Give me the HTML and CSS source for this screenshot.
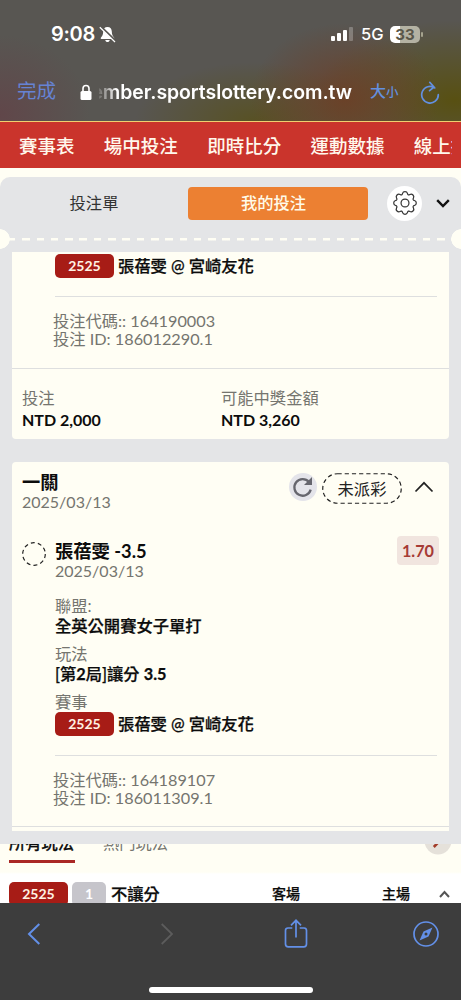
FILE: index.html
```html
<!DOCTYPE html>
<html lang="zh-Hant">
<head>
<meta charset="utf-8">
<title>我的投注</title>
<link rel="stylesheet" href="styles.css">
</head>
<body>
<div class="phone">
  <header class="browser-top">
    <div class="status">
      <span class="time">9:08</span>
      <svg class="bell" width="17" height="17" viewBox="0 0 17 17"><path d="M8.5 1C5.600 1 4.300 3 4.200 5.500C4.100 9 3.300 10 1.800 11.700Q1.300 13 2.500 13H14.500Q15.700 13 15.200 11.700C13.700 10 12.900 9 12.800 5.500C12.700 3 11.400 1 8.500 1ZM6.300 14H10.700C10.300 16.700 6.700 16.700 6.300 14Z" fill="#fff"/><path d="M1.500 .5L16.500 15" stroke="#585652" stroke-width="2.400"/><path d="M.8 1.200L16 16" stroke="#fff" stroke-width="1.200"/></svg>
      <svg class="signal" width="24" height="15" viewBox="0 0 24 15"><g fill="#fff"><rect x="1" y="9" width="4" height="5" rx="1"/><rect x="7" y="6" width="4" height="8" rx="1"/><rect x="13" y="3" width="4" height="11" rx="1"/><rect x="19" y="0" width="4" height="14" rx="1" opacity=".25"/></g></svg>
      <span class="net">5G</span>
      <span class="battery">33</span><i class="battery-tip"></i>
    </div>
    <div class="address">
      <span class="done">完成</span>
      <svg class="lock" width="12" height="17" viewBox="0 0 12 17"><path d="M3 8V4.500a3 3 0 0 1 6 0V8" fill="none" stroke="#fff" stroke-width="1.600"/><rect x=".5" y="7" width="11" height="9" rx="1.500" fill="#fff"/></svg>
      <span class="url"><span>ember.sportslottery.com.tw</span></span>
      <span class="size">大<small>小</small></span>
      <svg class="reload" width="20" height="24" viewBox="0 0 20 24"><path d="M14.700 6.900A8.300 8.300 0 1 0 18.300 13.700M9.800 1.400L14 6L9.600 9.700" fill="none" stroke="#6390df" stroke-width="1.700" stroke-linecap="round" stroke-linejoin="round"/></svg>
    </div>
  </header>

  <nav class="nav"><span>賽事表</span><span>場中投注</span><span>即時比分</span><span>運動數據</span><span class="last">線上投注</span></nav>

  <main class="slip">
    <div class="tabs">
      <span class="tab">投注單</span>
      <span class="tab active">我的投注</span>
      <span class="gear"><svg width="24" height="24" viewBox="-.5 -.5 17 17" fill="none" stroke="#333" stroke-width=".85"><circle cx="8" cy="8" r="2.800"/><path d="M9.796 1.343c-.527-1.790-3.065-1.790-3.592 0l-.094.319a.873.873 0 0 1-1.255.520l-.292-.160c-1.640-.892-3.433.902-2.540 2.541l.159.292a.873.873 0 0 1-.520 1.255l-.319.094c-1.790.527-1.790 3.065 0 3.592l.319.094a.873.873 0 0 1 .520 1.255l-.160.292c-.892 1.640.901 3.434 2.541 2.540l.292-.159a.873.873 0 0 1 1.255.520l.094.319c.527 1.790 3.065 1.790 3.592 0l.094-.319a.873.873 0 0 1 1.255-.520l.292.160c1.640.893 3.434-.902 2.540-2.541l-.159-.292a.873.873 0 0 1 .520-1.255l.319-.094c1.790-.527 1.790-3.065 0-3.592l-.319-.094a.873.873 0 0 1-.520-1.255l.160-.292c.893-1.640-.902-3.433-2.541-2.540l-.292.159a.873.873 0 0 1-1.255-.520z"/></svg></span>
      <svg class="fold" width="14" height="9" viewBox="0 0 14 9"><path d="M1.200 1.200L7 7L12.800 1.200" fill="none" stroke="#111" stroke-width="2.400"/></svg>
    </div>
    <div class="perforation"></div>

    <section class="card first">
      <div class="match"><b class="code">2525</b><span class="teams">張蓓雯 @ 宮崎友花</span></div>
      <div class="ids"><p>投注代碼:: 164190003</p><p>投注 ID: 186012290.1</p></div>
      <div class="money">
        <div><p>投注</p><b>NTD 2,000</b></div>
        <div><p>可能中獎金額</p><b>NTD 3,260</b></div>
      </div>
    </section>

    <section class="card second">
      <div class="card-head">
        <div class="title"><b>一關</b><p>2025/03/13</p></div>
        <svg class="refresh" width="28" height="28" viewBox="0 0 28 28"><circle cx="14" cy="14" r="14" fill="#e4e4ea"/><path d="M20 9A8.300 8.300 0 1 0 21.700 16.600" fill="none" stroke="#66666e" stroke-width="2.300"/><path d="M23 4V12H15Z" fill="#66666e"/></svg>
        <span class="pill"><svg width="80" height="31" viewBox="0 0 80 31"><rect x=".75" y=".75" width="78.500" height="29.500" rx="14.750" fill="none" stroke="#222" stroke-width="1.200" stroke-dasharray="4.200 3"/></svg><span>未派彩</span></span>
        <svg class="up" width="20" height="12" viewBox="0 0 20 12"><path d="M1.500 10.500L10 1.800L18.500 10.500" fill="none" stroke="#222" stroke-width="1.700"/></svg>
      </div>
      <div class="pick">
        <svg class="ring" width="24" height="24" viewBox="0 0 24 24"><circle cx="12" cy="12" r="11.300" fill="none" stroke="#222" stroke-width="1.200" stroke-dasharray="4 3.100"/></svg>
        <div class="title"><b>張蓓雯 -3.5</b><p>2025/03/13</p></div>
        <b class="odds">1.70</b>
      </div>
      <dl class="facts">
        <dt>聯盟:</dt><dd>全英公開賽女子單打</dd>
        <dt>玩法</dt><dd>[第<b>2</b>局]讓分 <b>3.5</b></dd>
        <dt>賽事</dt>
      </dl>
      <div class="match"><b class="code">2525</b><span class="teams">張蓓雯 @ 宮崎友花</span></div>
      <div class="ids"><p>投注代碼:: 164189107</p><p>投注 ID: 186011309.1</p></div>
    </section>
  </main>

  <section class="market">
    <div class="market-tabs">
      <b>所有玩法</b><span>熱門玩法</span>
      <svg width="28" height="28" viewBox="0 0 28 28"><circle cx="14" cy="14" r="13.500" fill="#e5e1da"/><path d="M9.500 6.500L16.500 13L9.800 20" fill="none" stroke="#a33d2b" stroke-width="2.600"/></svg>
    </div>
    <div class="market-row">
      <b class="code">2525</b><b class="count">1</b><span class="name">不讓分</span>
      <span class="side away">客場</span><span class="side home">主場</span>
      <svg width="11" height="8" viewBox="0 0 11 8"><path d="M1 7L5.500 2L10 7" fill="none" stroke="#555" stroke-width="2"/></svg>
    </div>
  </section>

  <footer class="browser-bottom">
    <div class="tools">
      <svg width="14" height="24" viewBox="0 0 14 24"><path d="M12.300 2L2 12L12.300 22" fill="none" stroke="#6390e8" stroke-width="2"/></svg>
      <svg width="14" height="24" viewBox="0 0 14 24"><path d="M1.700 2L12 12L1.700 22" fill="none" stroke="#5c5c5c" stroke-width="1.800"/></svg>
      <svg width="24" height="30" viewBox="0 0 24 30"><path d="M8.300 9H4Q1.500 9 1.500 11.500V25Q1.500 27.800 4.300 27.800H19.700Q22.500 27.800 22.500 25V11.500Q22.500 9 20 9H15.700M12 18.500V1.500M7 6.300L12 1.300L17 6.300" fill="none" stroke="#6390e8" stroke-width="1.700"/></svg>
      <svg width="26" height="26" viewBox="0 0 26 26"><circle cx="13" cy="13" r="12" fill="none" stroke="#6390e8" stroke-width="1.700"/><path d="M19.500 6.500L15.500 15.500L6.500 19.500L10.500 10.500Z" fill="#6390e8"/><circle cx="13" cy="13" r="1.500" fill="#3d3d3d"/></svg>
    </div>
    <div class="home-bar"></div>
  </footer>
</div>
</body>
</html>
```
FILE: styles.css
```css
* { box-sizing: border-box; }
body, p, dl, dd { margin: 0; }
body { font-family: Lato, "Noto Sans CJK TC", sans-serif; font-size: 16px; color: #0c0c0c; }
svg { display: block; flex: none; }
.phone { width: 461px; height: 1000px; overflow: hidden; background: #fffef4; display: flex; flex-direction: column; }
.phone > * { flex: none; }

.browser-top {
  height: 122px; padding-top: 20px; border-bottom: 1px solid #f0cf70; color: #fff;
  font-family: Inter, "Noto Sans CJK TC", sans-serif;
  background:
    radial-gradient(ellipse 95px 75px at 345px 98px, rgba(110,62,36,.85), transparent),
    radial-gradient(ellipse 140px 80px at 455px 100px, rgba(88,80,18,1), transparent),
    radial-gradient(ellipse 120px 60px at 255px 122px, rgba(88,80,24,.8), transparent),
    radial-gradient(ellipse 90px 80px at 0 115px, rgba(100,64,70,.7), transparent),
    #585652;
}
.status { height: 28px; display: flex; align-items: center; padding-left: 51px; }
.time { width: 45px; font-size: 20px; font-weight: 600; letter-spacing: -.3px; }
.bell { margin-left: 3px; }
.signal { margin-left: 214px; }
.net { margin-left: 7px; width: 29px; font-size: 16.500px; font-weight: 500; }
.battery { width: 30px; height: 17px; border-radius: 5px; background: linear-gradient(90deg, #fff 33%, #b4b2a3 33%); color: #5a574a; font-size: 15px; line-height: 17px; font-weight: 700; text-align: center; }
.battery-tip { width: 2px; height: 5px; margin-left: 1px; border-radius: 1px; background: #a5a38e; }
.address { height: 30px; margin-top: 29px; display: flex; align-items: center; padding-left: 17px; }
.done { width: 62px; font-size: 19.500px; line-height: 26px; margin-top: -2px; color: #6683d4; }
.lock { margin-left: .5px; }
.url { margin-left: 7.500px; width: 253px; overflow: hidden; display: flex; justify-content: flex-end; font-size: 19.400px; font-weight: 600; line-height: 28px; letter-spacing: -.03px; white-space: nowrap; mask-image: linear-gradient(90deg, rgba(0,0,0,.15), rgba(0,0,0,.5) 8px, #000 18px); }
.size { width: 32px; margin-left: 18px; font-size: 16px; font-weight: 500; line-height: 24px; margin-top: -1px; color: #6390df; white-space: nowrap; }
.size small { font-size: 12.500px; }
.reload { margin-left: 18px; margin-top: 1px; }

.nav { height: 46px; background: #ca342c; color: #fff8ec; display: flex; gap: 29.300px; align-items: center; padding-left: 19px; font-size: 18.500px; font-weight: 500; white-space: nowrap; overflow: hidden; }
.nav .last { width: 38.500px; overflow: hidden; }

.slip { height: 667px; margin-top: 9px; background: #e4e5e7; border-radius: 10px 10px 0 0; }
.tabs { height: 52px; display: flex; align-items: center; }
.tab { width: 188px; height: 33px; line-height: 32px; text-align: center; color: #333; font-size: 16.300px; }
.tab.active { width: 180px; border-radius: 4px; background: #ec8032; color: #fffbe9; font-weight: 500; padding-right: 9px; }
.gear { width: 35px; height: 35px; margin-left: 19px; border-radius: 50%; background: #fff; display: grid; place-items: center; }
.fold { margin-left: 14px; }
.perforation { height: 20px; background:
  radial-gradient(circle at 0 10px, #fffef4 9.500px, transparent 10px),
  radial-gradient(circle at 461px 10px, #fffef4 9.500px, transparent 10px),
  repeating-linear-gradient(90deg, #fffef4 0 7.500px, transparent 7.500px 14.300px) 8px 8.500px / 445px 2.500px no-repeat; }

.card { margin: 0 12px; background: #fffef4; border-radius: 4px; }
.first { height: 187px; margin-top: 3px; padding-top: 2px; border-radius: 0 0 4px 4px; }
.second { height: 369px; margin-top: 23px; padding-top: 7px; border-radius: 4px 4px 0 0; }
.match { height: 24px; display: flex; align-items: center; padding-left: 43px; line-height: 24px; }
.code { width: 59px; height: 24px; border-radius: 5px; background: #a71c16; color: #fff2e4; font-size: 14px; line-height: 24px; text-align: center; }
.match .code { margin-right: 4px; }
.teams { font-size: 16.300px; font-weight: 500; -webkit-text-stroke: .25px; }
.ids { margin: 18px 12px 0 43px; border-top: 1px solid #dedfdf; padding-top: 15px; height: 72px; color: #75756f; font-size: 16.250px; }
.ids p { margin-left: -2px; line-height: 17.500px; }
.second .ids { margin-top: 19px; }
.second .ids::after { content: ""; display: block; width: 437px; margin: 20px 0 0 -43px; border-top: 1px solid #dedfdf; }
.money { height: 71px; border-top: 1px solid #dedfdf; display: flex; padding: 18px 0 0 10px; line-height: 22px; }
.money div { width: 199px; }
.money p, .title p, .facts dt { color: #75756f; }
.money p { font-size: 16.300px; }

.card-head { height: 67px; display: flex; align-items: flex-start; padding-left: 10px; }
.title { line-height: 20px; }
.title b { display: block; font-size: 18.300px; }
.title p { font-size: 16px; }
.card-head .title { width: 267px; padding-top: 3px; }
.refresh { margin-top: 4px; }
.pill { margin: 4px 0 0 5px; width: 80px; height: 31px; display: grid; }
.pill > * { grid-area: 1 / 1; }
.pill span { text-align: center; line-height: 31px; color: #222; font-size: 16.300px; }
.up { margin: 12px 0 0 12px; }
.pick { height: 59px; display: flex; align-items: flex-start; padding-left: 10px; }
.ring { margin-top: 6px; }
.pick .title { margin-left: 9px; width: 342px; padding-top: 5px; }
.odds { width: 42px; height: 29px; border-radius: 4px; background: #f1e5df; color: #a63b35; font-size: 16.200px; line-height: 29px; text-align: center; }
.facts { height: 117px; padding: 1px 0 0 43px; font-size: 16.300px; }
.facts dt { height: 20px; line-height: 20px; }
.facts dd { height: 28px; line-height: 20px; font-weight: 500; -webkit-text-stroke: .25px; }

.market { height: 59px; overflow: hidden; background: linear-gradient(#fffef4 28px, #fff 30px); }
.market-tabs { height: 19px; overflow: hidden; display: flex; align-items: flex-end; padding-left: 9px; }
.market-tabs b { width: 66px; height: 32px; line-height: 24px; border-bottom: 3px solid #aa2826; font-size: 16.300px; font-weight: 500; -webkit-text-stroke: .25px; }
.market-tabs span { margin-left: 28px; height: 32px; line-height: 24px; color: #75756f; width: 321px; font-size: 16.300px; }
.market-tabs svg { margin-bottom: 8px; }
.market-row { height: 24px; margin-top: 19px; display: flex; align-items: center; padding-left: 9px; }
.count { width: 34px; height: 24px; margin-left: 4px; border-radius: 5px; background: #c6c5cb; color: #fff; font-size: 14px; line-height: 24px; text-align: center; }
.name { margin-left: 5px; width: 161px; font-size: 16.300px; line-height: 22px; }
.side { width: 110px; font-size: 14px; line-height: 22px; }
.name, .side { font-weight: 500; -webkit-text-stroke: .25px; margin-top: -1px; }
.home { width: 57px; }

.browser-bottom { height: 97px; background: #3d3d3d; }
.tools { height: 62px; padding: 0 22px 0 27px; display: grid; grid-template-columns: 133px 124px 1fr auto; align-items: center; }
.home-bar { width: 164px; height: 6px; margin: 22px auto 0; border-radius: 3px; background: #fff; }
```
